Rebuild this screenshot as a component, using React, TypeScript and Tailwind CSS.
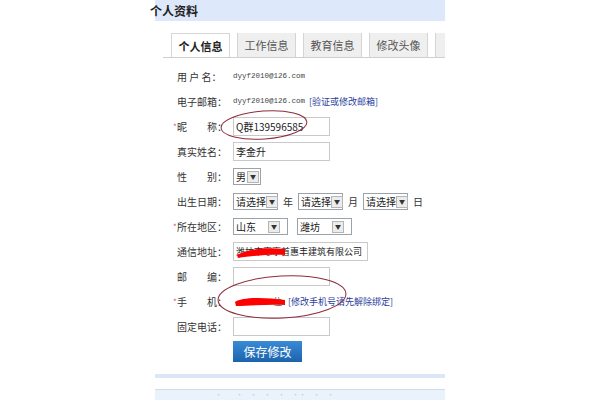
import React from "react";

const F = { fontFamily: '"Noto Sans CJK SC", "Noto Sans", sans-serif' };

function Sel({ text, w, arrowGap = 0 }: { text: string; w: number; arrowGap?: number }) {
  return (
    <div
      className="flex h-[17px] items-center border border-[#9aa3ab] bg-white"
      style={{ width: w }}
    >
      <span className="flex-1 whitespace-nowrap pl-[2px] text-[10px] leading-none text-[#222]">{text}</span>
      <span
        className="flex h-[12px] w-[12px] shrink-0 items-center justify-center border border-[#b5b5b5] bg-[#ececec]"
        style={{ marginRight: 1 + arrowGap }}
      >
        <span className="text-[6px] leading-none text-[#333]">▼</span>
      </span>
    </div>
  );
}

function Row({ label, star, children }: { label: string; star?: boolean; children?: React.ReactNode }) {
  return (
    <div className="flex h-[25px] items-center">
      <div className="flex w-[78px] items-center">
        <span className="w-[22px] pl-[18px] text-[8px] text-[#e05060]">{star ? "*" : ""}</span>
        <span className="whitespace-pre text-[10px] text-[#333]">{label}</span>
      </div>
      <div className="flex items-center">{children}</div>
    </div>
  );
}

function Input({ value, w = 97 }: { value?: string; w?: number }) {
  return (
    <div
      className="flex h-[19px] items-center border border-[#c9c9c9] bg-white px-[2px] text-[10px] text-[#222]"
      style={{ width: w }}
    >
      {value}
    </div>
  );
}

export default function App() {
  const tabs = ["个人信息", "工作信息", "教育信息", "修改头像", ""];
  return (
    <div className="relative h-[400px] w-[600px] overflow-hidden bg-white" style={F}>
      <div className="ml-[155px] flex w-[290px] flex-col">
        <div className="flex h-[21px] items-center bg-[#dde9fb]">
          <span className="-ml-[5px] text-[12px] font-bold text-[#222]">个人资料</span>
        </div>
        <div className="ml-[8px] mt-[12px] flex h-[25px] items-end overflow-hidden border-b border-[#cfcfcf] pl-[8px]">
          {tabs.map((t, i) => (
            <div
              key={i}
              className={
                "mr-[7px] flex h-[25px] w-[59px] shrink-0 items-center justify-center border border-b-0 text-[11px] " +
                (i === 0
                  ? "relative top-[1px] border-[#d6d6d6] bg-white font-bold text-[#222]"
                  : "border-[#d4d4d4] bg-[#efefef] text-[#555]")
              }
            >
              {t}
            </div>
          ))}
        </div>
        <div className="mt-[6px] flex flex-col">
          <Row label="用 户 名：">
            <span className="text-[7.5px] text-[#444]" style={{ fontFamily: '"Liberation Mono", monospace' }}>
              dyyf2010@126.com
            </span>
          </Row>
          <Row label="电子邮箱：">
            <span className="text-[7.5px] text-[#444]" style={{ fontFamily: '"Liberation Mono", monospace' }}>
              dyyf2010@126.com
            </span>
            <span className="ml-[4px] text-[9px] text-[#2b3d9c]">[验证或修改邮箱]</span>
          </Row>
          <Row label="昵　　称：" star>
            <Input value="Q群139596585" />
          </Row>
          <Row label="真实姓名：">
            <Input value="李金升" />
          </Row>
          <Row label="性　　别：">
            <Sel text="男" w={28} />
          </Row>
          <Row label="出生日期：">
            <Sel text="请选择" w={45} />
            <span className="mx-[5px] text-[10px] text-[#333]">年</span>
            <Sel text="请选择" w={45} />
            <span className="mx-[5px] text-[10px] text-[#333]">月</span>
            <Sel text="请选择" w={45} />
            <span className="ml-[5px] text-[10px] text-[#333]">日</span>
          </Row>
          <Row label="所在地区：" star>
            <Sel text="山东" w={55} arrowGap={6} />
            <span className="w-[9px]" />
            <Sel text="潍坊" w={55} arrowGap={6} />
          </Row>
          <Row label="通信地址：">
            <div className="relative flex h-[19px] w-[135px] items-center overflow-hidden border border-[#c9c9c9] bg-white px-[2px] text-[9px] text-[#222]">
              <span className="whitespace-nowrap">潍坊市寒亭首惠丰建筑有限公司</span>
              <svg className="absolute left-[2px] top-[3px]" width="50" height="13" viewBox="0 0 50 13">
                <path d="M1 9 C10 3, 30 1, 49 3 L49 9 C35 8, 15 10, 2 12 Z" fill="#f00" />
              </svg>
            </div>
          </Row>
          <Row label="邮　　编：">
            <Input />
          </Row>
          <Row label="手　　机：" star>
            <div className="relative flex h-[19px] w-[55px] items-center">
              <span className="pl-[40px] text-[9px] text-[#555]">位</span>
              <svg className="absolute left-[1px] top-[4px]" width="52" height="11" viewBox="0 0 52 11">
                <path d="M1 6 C8 1, 30 1, 51 4 L51 9 C35 8, 14 10, 2 10 Z" fill="#f00" />
              </svg>
            </div>
            <span className="text-[9px] text-[#2b3d9c]">[修改手机号请先解除绑定]</span>
          </Row>
          <Row label="固定电话：">
            <Input />
          </Row>
          <div className="flex h-[25px] items-center pl-[78px]">
            <div className="flex h-[21px] w-[69px] items-center justify-center bg-gradient-to-b from-[#3a8bd6] to-[#1c63ad] text-[12px] text-white">
              保存修改
            </div>
          </div>
        </div>
        <div className="mt-[10px] h-[4px] bg-[#dbe6f7]" />
        <div className="mt-[11px] flex h-[20px] items-start border-t border-[#cddcf0] bg-[#eaf2fc] pl-[60px] pt-[1px] text-[7px] leading-none text-[#c5c9d0]">
          ·　　·　·　·　·　··　·　·
        </div>
      </div>
      <svg className="pointer-events-none absolute left-0 top-0" width="600" height="400">
        <ellipse cx="264" cy="125" rx="43" ry="14" transform="rotate(-4 264 125)" fill="none" stroke="#8e2c3c" strokeWidth="1" />
        <ellipse cx="282" cy="297" rx="64" ry="21" transform="rotate(-3 282 297)" fill="none" stroke="#8e2c3c" strokeWidth="1" />
      </svg>
    </div>
  );
}
